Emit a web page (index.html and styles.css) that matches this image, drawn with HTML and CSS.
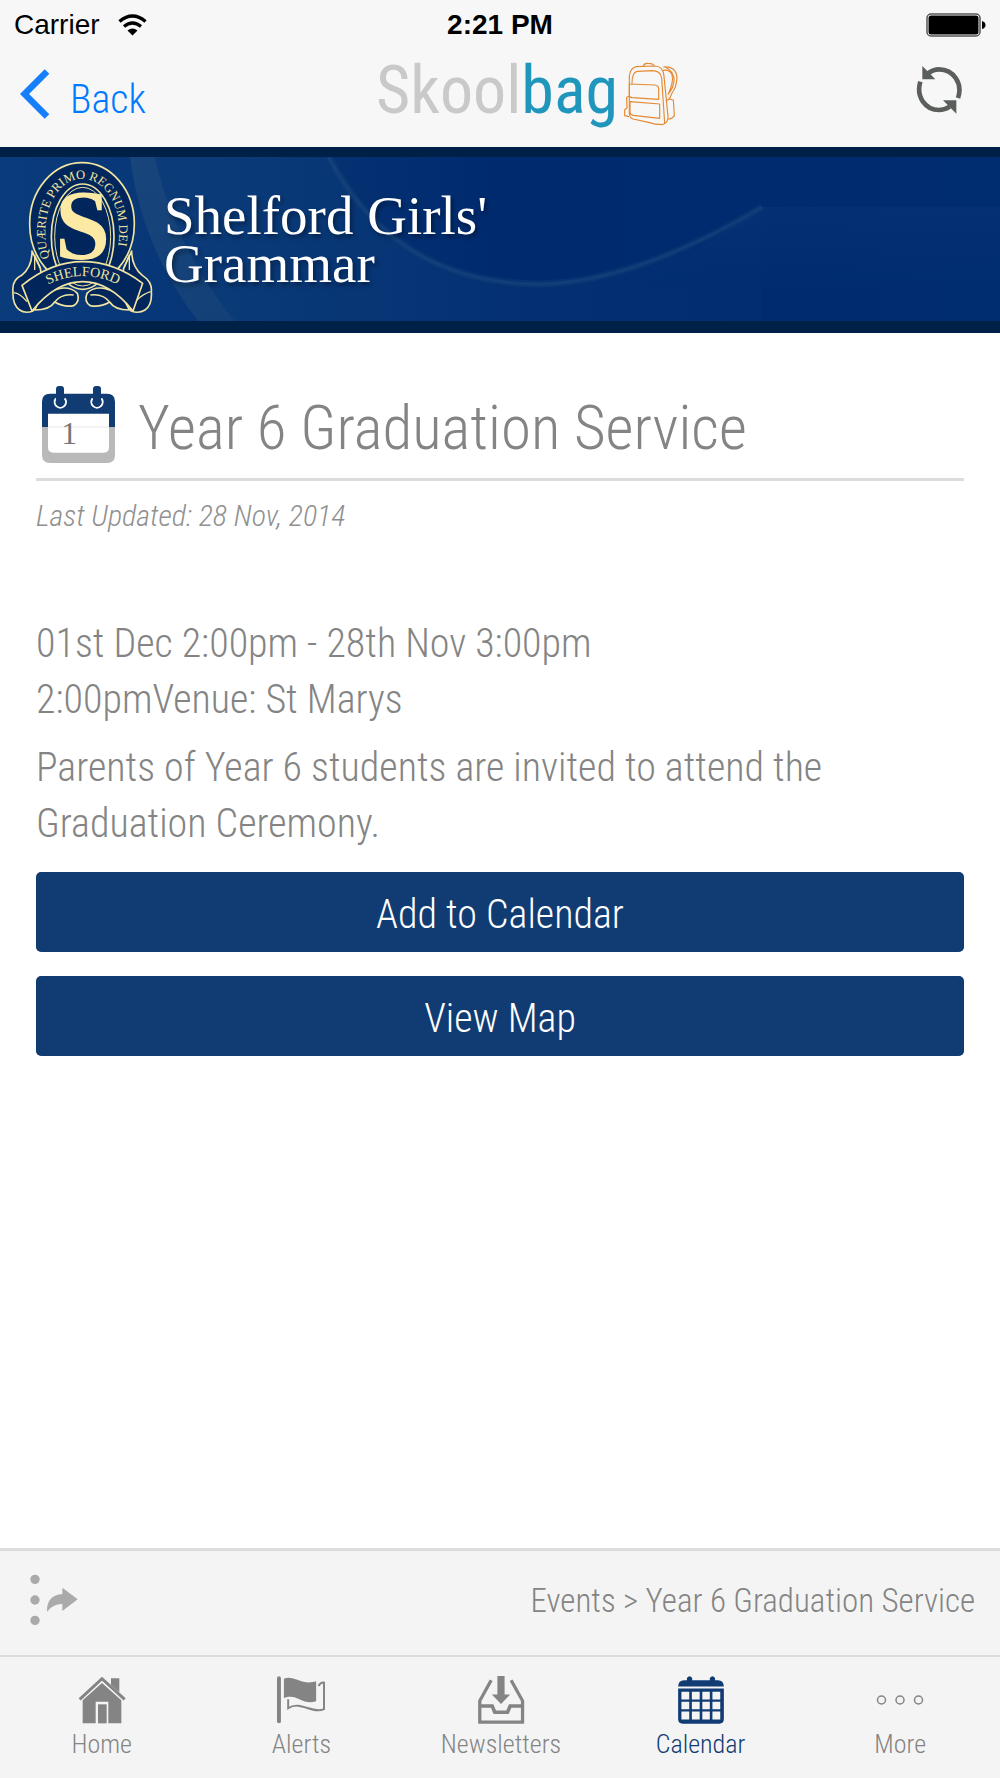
FILE: index.html
```html
<!DOCTYPE html>
<html lang="en">
<head>
    <meta charset="UTF-8">
    <meta name="viewport" content="width=device-width, initial-scale=1.0">
    <title>Year 6 Graduation Service</title>
    <link rel="stylesheet" href="styles.css">
</head>
<body>
<header>
    <div class="status-bar">
        <div class="carrier">
            <span>Carrier</span>
            <svg width="29" height="22" viewBox="0 0 29 22" aria-hidden="true">
                <path d="M1.5 7.5Q14.5-3.5 27.5 7.5" fill="none" stroke="#000" stroke-width="3.4"/>
                <path d="M6 12.5Q14.5 5.5 23 12.5" fill="none" stroke="#000" stroke-width="3.2"/>
                <path d="M9.5 16.5Q14.5 12.5 19.5 16.5L14.5 21.5Z"/>
            </svg>
        </div>
        <div class="time">2:21 PM</div>
        <svg class="battery" width="60" height="24" viewBox="0 0 60 24" aria-hidden="true">
            <rect x="1" y="1" width="53" height="22" rx="4" fill="#fff" stroke="#555" stroke-width="1.5"/>
            <rect x="2.5" y="2.5" width="50" height="19" rx="2.5"/>
            <path d="M56 8Q59.500 9 59.500 12T56 16Z"/>
        </svg>
    </div>
    <nav class="nav-bar">
        <a class="back" href="#">
            <svg width="30" height="50" viewBox="0 0 30 50" aria-hidden="true">
                <path d="M27 2.500L4.500 25L27 47.500" fill="none" stroke="#147efb" stroke-width="6.500"/>
            </svg>
            <span>Back</span>
        </a>
        <div class="logo">
            <div class="logo-text"><span class="logo-skool">Skool</span><span class="logo-bag">bag</span></div>
            <svg width="54" height="64" viewBox="788 52 162 192" fill="none" stroke="#e58a35" stroke-width="3.500" stroke-linejoin="round" aria-hidden="true">
                <path d="M804 170V95Q806 70 825 66L880 64Q906 64 908 95L920 215Q922 234 903 240Q880 240 862 233L815 223Q804 220 804 205Z"/>
                <path d="M812 116Q812 82 828 80L872 78Q898 78 901 100L910 236"/>
                <path d="M845 65Q848 55 860 56Q876 56 878 64"/>
                <path d="M804 118L880 121Q892 122 892 133V164L812 159Q804 158 804 150Z"/>
                <path d="M806 171L895 178V221L815 212Q806 210 806 202Z"/>
                <path d="M906 67Q945 64 947 100Q945 128 932 145L924 164"/>
                <path d="M904 77Q925 74 932 90Q938 112 920 150M912 68Q940 80 938 110Q936 128 924 145"/>
                <path d="M914 170L922 163L936 166L939 213Q932 224 919 223"/>
                <path d="M803 155L796 158L797 190L790 195V213L803 216"/>
            </svg>
        </div>
        <button class="refresh" type="button" aria-label="Refresh">
            <svg width="46" height="48" viewBox="109 197 138 144" aria-hidden="true">
                <path d="M122 244C108 290 138 329 178 329Q195 329 210 319" fill="none" stroke="#5b5f5b" stroke-width="14"/>
                <path d="M235 293C250 250 222 207 178 207Q160 207 146 219" fill="none" stroke="#5b5f5b" stroke-width="14"/>
                <path d="M128 197V237H167ZM230 340V300H190Z" fill="#5b5f5b"/>
            </svg>
        </button>
    </nav>
</header>

<section class="banner">
    <svg class="banner-art" viewBox="0 0 1000 164" preserveAspectRatio="none" aria-hidden="true">
        <defs>
            <linearGradient id="band" x1="0" y1="0" x2="0" y2="1">
                <stop offset="0" stop-color="#1e4a7c"/>
                <stop offset="1" stop-color="#184578"/>
            </linearGradient>
            <linearGradient id="glow" x1="0" y1="0" x2="0" y2="1">
                <stop offset="0" stop-color="#0a3478"/>
                <stop offset="1" stop-color="#002c70"/>
            </linearGradient>
            <linearGradient id="shade" x1="0" y1="0" x2="1" y2="0">
                <stop offset="0" stop-color="#0d3f7a"/>
                <stop offset="1" stop-color="#032e72"/>
            </linearGradient>
        </defs>
        <path d="M155 0H329Q395 126 540 127Q635 125 762 50V164H235Q175 92 155 0Z" fill="url(#shade)" opacity=".6"/>
        <path d="M130 0Q142 92 198 164H235Q175 92 155 0Z" fill="url(#band)" opacity=".7"/>
        <path d="M762 50H1000V130H640Z" fill="url(#glow)" opacity=".5"/>
        <path d="M329 0Q395 126 540 127Q635 125 762 50" fill="none" stroke="#1f4c80" stroke-width="7" opacity=".25"/>
        <path d="M329 0Q395 126 540 127Q635 125 762 50" fill="none" stroke="#1f4c80" stroke-width="3" opacity=".4"/>
    </svg>
    <svg class="crest" width="142" height="153" viewBox="34 63 426 459" role="img" aria-label="Shelford crest">
        <g fill="#00265c" stroke="#f1e3a0" stroke-width="5" stroke-linejoin="round">
            <path d="M97 333Q98 380 66 406Q36 420 40 455Q38 495 60 510Q76 522 100 513L130 440L122 385Z"/>
            <path d="M396 333Q396 380 428 406Q458 425 455 455Q458 495 436 510Q418 522 394 513L364 440L372 385Z"/>
            <path d="M105 510Q150 510 165 486Q195 503 222 497Q242 485 233 460Q215 440 180 445L130 460Z"/>
            <path d="M389 510Q345 510 330 486Q300 503 272 497Q252 485 262 460Q280 440 315 445L364 460Z"/>
            <ellipse cx="247" cy="252" rx="157" ry="184"/>
            <ellipse cx="249" cy="290" rx="94" ry="158"/>
        </g>
        <ellipse cx="249" cy="290" rx="84" ry="148" fill="#00265c" stroke="#f1e3a0" stroke-width="3"/>
        <path id="motto" d="M150 354C114 250 156 118 248 117C340 118 382 250 345 358" fill="none"/>
        <text class="motto"><textPath href="#motto">QUÆRITE PRIMO REGNUM DEI</textPath></text>
        <text class="crest-letter" x="249" y="354">S</text>
        <path d="M67 436Q155 365 249 365T429 430L400 513Q330 425 249 425T97 513Z" fill="#00265c" stroke="#f1e3a0" stroke-width="5" stroke-linejoin="round"/>
        <path d="M42 458Q62 460 82 485M453 455Q430 462 412 480M165 486Q185 460 222 465M330 486Q310 460 272 465M105 390V345L122 383M389 390V345L373 383" fill="none" stroke="#f1e3a0" stroke-width="4"/>
        <path id="ribbon" d="M125 444Q249 372 374 444" fill="none"/>
        <text class="ribbon-text"><textPath href="#ribbon" startOffset="50%">SHELFORD</textPath></text>
    </svg>
    <div class="school-name">Shelford Girls'<br>Grammar</div>
</section>

<main>
    <div class="title-row">
        <svg width="73" height="77" viewBox="66 46 219 231" aria-hidden="true">
            <path d="M66 169V93Q66 69 90 69H261Q285 69 285 93V169Z" fill="#113c73"/>
            <path d="M66 169H285V253Q285 277 261 277H90Q66 277 66 253Z" fill="#b9b9b9"/>
            <path d="M84 129H267V230Q267 246 251 246H100Q84 246 84 230Z" fill="#fff"/>
            <path d="M84 169H267" stroke="#dcdcdc" stroke-width="2"/>
            <path d="M108 83A17 17 0 1 0 134 83M218 83A17 17 0 1 0 244 83" fill="none" stroke="#fff" stroke-width="6"/>
            <rect x="108" y="46" width="24" height="59" rx="9" fill="#113c73"/>
            <rect x="219" y="46" width="24" height="59" rx="9" fill="#113c73"/>
            <text class="icon-day" x="148" y="219">1</text>
        </svg>
        <h1>Year 6 Graduation Service</h1>
    </div>
    <p class="updated">Last Updated: 28 Nov, 2014</p>
    <p class="details">01st Dec 2:00pm - 28th Nov 3:00pm<br>2:00pmVenue: St Marys</p>
    <p class="details">Parents of Year 6 students are invited to attend the Graduation Ceremony.</p>
    <button class="action" type="button">Add to Calendar</button>
    <button class="action" type="button">View Map</button>
</main>

<footer>
    <div class="crumb-bar">
        <button class="share" type="button" aria-label="Share">
            <svg width="48" height="52" viewBox="90 133 144 156" fill="#aaa" aria-hidden="true">
                <circle cx="105" cy="149" r="14"/>
                <circle cx="105" cy="211" r="14"/>
                <circle cx="105" cy="272" r="14"/>
                <path d="M141 246C140 211 158 195 187 193V174L233 209L187 244V223Q160 222 141 246Z"/>
            </svg>
        </button>
        <div class="crumbs">Events &gt; Year 6 Graduation Service</div>
    </div>
    <nav class="tabs">
        <a href="#">
            <svg width="48" height="48" viewBox="232 440 144 144" fill="currentColor" aria-hidden="true">
                <path d="M237 510L304 448L372 510" fill="none" stroke="currentColor" stroke-width="9"/>
                <path d="M331 447H356V489L331 467Z"/>
                <path d="M304 461L362 513V582H323V517H285V582H246V513Z"/>
                <path d="M292 525H318V582H292Z"/>
            </svg>
            <span>Home</span>
        </a>
        <a href="#">
            <svg width="48" height="48" viewBox="834 440 146 144" fill="currentColor" aria-hidden="true">
                <rect x="834" y="440" width="12" height="143" rx="6"/>
                <path d="M855 447C885 435 910 469 953 455V516C910 530 895 490 855 506Z"/>
                <path d="M868 510V537C905 512 940 556 977 540V459Q968 456 960 469" fill="none" stroke="currentColor" stroke-width="6"/>
            </svg>
            <span>Alerts</span>
        </a>
        <a href="#">
            <svg width="48" height="48" viewBox="175 108 144 147" fill="currentColor" aria-hidden="true">
                <path d="M236 108H258V165H275L247 194L219 165H236Z"/>
                <path d="M217 121L182 184V249H313V184L278 121" fill="none" stroke="currentColor" stroke-width="10"/>
                <path d="M182 200H220L228 219H267L275 200H313" fill="none" stroke="currentColor" stroke-width="11"/>
            </svg>
            <span>Newsletters</span>
        </a>
        <a class="active" href="#">
            <svg width="48" height="48" viewBox="776 108 146 147" fill="currentColor" aria-hidden="true">
                <path d="M779 140Q780 121 797 121H806V114Q814 103 822 114V121H876V114Q884 103 892 114V121H901Q918 121 919 140Z"/>
                <path fill-rule="evenodd" d="M779 146H919V240Q919 254 905 254H793Q779 254 779 240ZM789 156V180H813V156ZM821 156V180H845V156ZM853 156V180H876V156ZM884 156V180H908V156ZM789 187V210H813V187ZM821 187V210H845V187ZM853 187V210H876V187ZM884 187V210H908V187ZM789 217V241H813V217ZM821 217V241H845V217ZM853 217V241H876V217ZM884 217V241H908V217Z"/>
            </svg>
            <span>Calendar</span>
        </a>
        <a href="#">
            <svg width="48" height="48" viewBox="0 0 48 48" fill="none" stroke="currentColor" stroke-width="1.5" aria-hidden="true">
                <circle cx="5.500" cy="24" r="4"/>
                <circle cx="24" cy="24" r="4"/>
                <circle cx="42.500" cy="24" r="4"/>
            </svg>
            <span>More</span>
        </a>
    </nav>
</footer>
</body>
</html>
```

FILE: styles.css
```css
* {
    box-sizing: border-box;
}
body {
    font-family: "Roboto Condensed", Roboto, sans-serif;
    font-weight: 300;
    background-color: #fff;
    color: #848484;
    display: flex;
    flex-direction: column;
    min-height: 100vh;
    margin: 0;
}
svg {
    display: block;
    flex: none;
}
a {
    text-decoration: none;
}
button {
    font: inherit;
    border: none;
    padding: 0;
    background: none;
    cursor: pointer;
}

/* header */
header {
    background-color: #f7f7f7;
}
.status-bar {
    display: grid;
    grid-template-columns: 1fr auto 1fr;
    align-items: center;
    height: 48px;
    padding: 2px 14px 0;
    font-family: "Liberation Sans", Arial, sans-serif;
    font-size: 28px;
    font-weight: 400;
    color: #000;
}
.carrier {
    display: flex;
    align-items: center;
    gap: 18px;
}
.time {
    font-weight: 700;
}
.battery {
    justify-self: end;
}
.nav-bar {
    display: grid;
    grid-template-columns: 1fr auto 1fr;
    height: 99px;
    padding: 0 38px 0 20px;
}
.back {
    display: flex;
    align-items: center;
    gap: 20px;
    height: 92px;
    font-size: 40px;
    color: #007aff;
}
.back span {
    padding-top: 10px;
}
.logo {
    display: flex;
    align-items: center;
    gap: 6px;
    height: 92px;
    padding-left: 72px;
}
.logo-text {
    padding-bottom: 6px;
    font-size: 66px;
    font-weight: 400;
    line-height: 80px;
}
.logo-skool {
    color: #c9c9c9;
}
.logo-bag {
    color: #2196bd;
}
.refresh {
    justify-self: end;
    align-self: start;
    padding-top: 18px;
}

/* school banner */
.banner {
    position: relative;
    display: flex;
    align-items: center;
    gap: 11px;
    height: 186px;
    padding: 0 11px;
    border-top: 10px solid #002147;
    border-bottom: 12px solid #002147;
    background: linear-gradient(90deg, #0a3b7b 0%, #073575 25%, #002a6e 50%, #002c70 100%);
}
.banner-art {
    position: absolute;
    top: 0;
    left: 0;
    width: 100%;
    height: 100%;
}
.crest,
.school-name {
    position: relative;
}
.crest {
    margin-bottom: 4px;
}
.motto,
.ribbon-text {
    font-family: "Liberation Serif", serif;
    font-size: 38px;
    font-weight: 400;
    fill: #f1e3a0;
}
.ribbon-text {
    font-size: 42px;
    text-anchor: middle;
}
.crest-letter {
    font-family: "Liberation Serif", serif;
    font-size: 300px;
    font-weight: 700;
    text-anchor: middle;
    fill: #fce9a4;
}
.school-name {
    padding-top: 2px;
    font-family: "Liberation Serif", "Times New Roman", serif;
    font-size: 55px;
    font-weight: 400;
    line-height: 48px;
    color: #fff;
    text-shadow: 2px 3px 4px rgba(0, 0, 0, 0.4);
}

/* event */
main {
    flex: 1;
    padding: 52px 36px 24px;
}
.title-row {
    display: flex;
    align-items: center;
    gap: 23px;
    height: 96px;
    padding: 0 6px 14px;
    border-bottom: 3px solid #dcdcdc;
}
h1 {
    margin: 0;
    padding-top: 6px;
    font-size: 61px;
    font-weight: 300;
    line-height: 72px;
}
.icon-day {
    font-family: "Liberation Serif", serif;
    font-size: 96px;
    font-weight: 400;
    text-anchor: middle;
    fill: #777;
}
.updated {
    margin: 15px 0 80px;
    font-size: 30px;
    font-style: italic;
    line-height: 40px;
    color: #909090;
}
.details {
    margin: 0 0 12px;
    font-size: 40px;
    line-height: 56px;
}
.action {
    display: block;
    width: 100%;
    height: 80px;
    margin-top: 24px;
    padding-top: 4px;
    border-radius: 5px;
    font-size: 40px;
    background-color: #113c73;
    color: #fff;
}
.details + .action {
    margin-top: 20px;
}

/* bottom bars */
footer {
    background-color: #f4f4f4;
}
.crumb-bar {
    display: flex;
    align-items: center;
    justify-content: space-between;
    height: 107px;
    padding: 0 25px 6px 30px;
    border-top: 3px solid #dcdcdc;
}
.crumbs {
    font-size: 33px;
}
.tabs {
    display: grid;
    grid-template-columns: repeat(5, 1fr);
    height: 123px;
    padding: 19px 0 0 2px;
    border-top: 2px solid #dcdcdc;
}
.tabs a {
    display: flex;
    flex-direction: column;
    align-items: center;
    gap: 4px;
    font-size: 26px;
    line-height: 32px;
    color: #848484;
}
.tabs .active {
    color: #113c73;
}
```
